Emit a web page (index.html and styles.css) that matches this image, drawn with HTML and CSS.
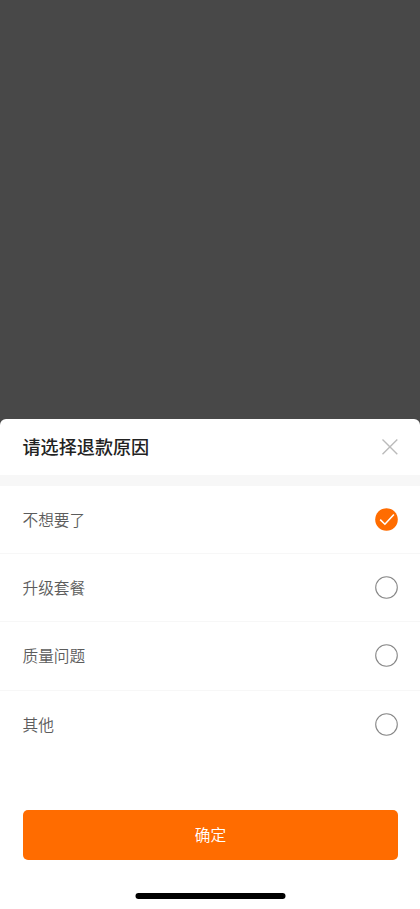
FILE: index.html
```html
<!DOCTYPE html>
<html lang="zh-CN">
<head>
<meta charset="utf-8">
<meta name="viewport" content="width=device-width, initial-scale=1">
<title>请选择退款原因</title>
<link rel="stylesheet" href="styles.css">
</head>
<body>
<main class="overlay">
  <section class="sheet">
    <header class="header">
      <h1 class="title">请选择退款原因</h1>
      <svg class="close" viewBox="0 0 16 16"><path d="M.5.5 15.3 15.3M15.3.5.5 15.3"/></svg>
    </header>
    <ul class="options">
      <li class="option"><span>不想要了</span><svg class="radio checked" viewBox="0 0 23 23"><circle cx="11.5" cy="11.5" r="11.3"/><path d="M5.2 11.6 9.9 16.2 18.9 6.5"/></svg></li>
      <li class="option"><span>升级套餐</span><svg class="radio" viewBox="0 0 23 23"><circle cx="11.5" cy="11.5" r="10.8"/></svg></li>
      <li class="option"><span>质量问题</span><svg class="radio" viewBox="0 0 23 23"><circle cx="11.5" cy="11.5" r="10.8"/></svg></li>
      <li class="option"><span>其他</span><svg class="radio" viewBox="0 0 23 23"><circle cx="11.5" cy="11.5" r="10.8"/></svg></li>
    </ul>
    <button class="confirm">确定</button>
    <div class="home-bar"></div>
  </section>
</main>
</body>
</html>
```
FILE: styles.css
```css
* { box-sizing: border-box; }
body {
  margin: 0;
  font-family: "Noto Sans CJK SC", sans-serif;
  color: #222;
}
.overlay {
  height: 909px;
  display: flex;
  flex-direction: column;
  justify-content: flex-end;
  background: #484848;
}
.sheet {
  height: 490.5px;
  display: flex;
  flex-direction: column;
  background: #fff;
  border-radius: 6px 6px 0 0;
}
.header {
  height: 67.5px;
  padding: 0 22.5px;
  display: flex;
  align-items: center;
  justify-content: space-between;
  border-bottom: 11px solid #f7f7f7;
}
.title { margin: 0; padding-bottom: 2px; font-size: 18.1px; font-weight: 500; line-height: 26px; }
.close { width: 16px; height: 16px; fill: none; stroke: #bbb; stroke-width: 1.4; }
.options { margin: 0; padding: 0; list-style: none; }
.option {
  height: 68.2px;
  padding: 0 22.5px;
  display: flex;
  align-items: center;
  justify-content: space-between;
  border-bottom: 1px solid #f7f7f7;
  font-size: 15.7px;
  font-weight: 350;
  color: #5c5c5c;
}
.option:last-child { border-bottom-color: transparent; }
.radio { width: 23px; height: 23px; fill: none; stroke: #888; stroke-width: 1.1; }
.checked circle { fill: #ff6c00; stroke: none; }
.checked path { stroke: #fff; stroke-width: 1.6; }
.confirm {
  height: 49.4px;
  margin: 51.5px 22.5px 0;
  padding: 0 0 0 1px;
  border: 0;
  border-radius: 5px;
  background: #ff6c00;
  color: #fff;
  font: 350 15.7px "Noto Sans CJK SC", sans-serif;
}
.home-bar { width: 150px; height: 6px; margin: 33.3px auto 0; border-radius: 3px; background: #000; transform: translateX(.5px); }
```
